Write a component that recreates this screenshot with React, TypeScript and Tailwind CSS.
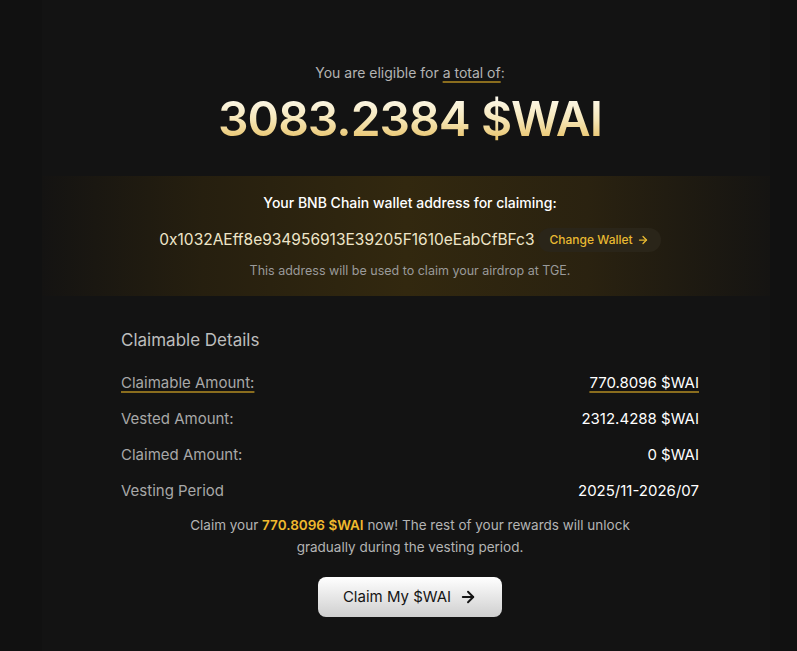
import { ArrowRight } from 'lucide-react';

const rows = [
  { label: 'Claimable Amount:', value: '770.8096 $WAI', highlight: true },
  { label: 'Vested Amount:', value: '2312.4288 $WAI' },
  { label: 'Claimed Amount:', value: '0 $WAI' },
  { label: 'Vesting Period', value: '2025/11-2026/07' },
];

export default function App() {
  return (
    <div className="min-h-[651px] w-full bg-[#111111] font-['Inter',sans-serif] text-white">
      <div className="ml-[42px] mr-[27px] min-h-[651px] bg-[#131313]">
        {/* Total */}
        <div className="flex flex-col items-center pt-[63px] pl-[8px]">
          <p className="text-[14px] leading-5 text-[#b4b4b4]">
            You are eligible for{' '}
            <span className="underline decoration-[#8a6d1e] decoration-2 underline-offset-[3px]">a total of</span>:
          </p>
          <h1 className="mt-[6px] bg-gradient-to-b from-[#ffffff] via-[#f6e7b8] to-[#e2b33c] bg-clip-text text-[48px] leading-[60px] font-semibold tracking-[-1px] text-transparent">
            3083.2384 $WAI
          </h1>
        </div>

        {/* Wallet band */}
        <div className="mt-[27px] flex h-[120px] flex-col items-center bg-[linear-gradient(90deg,#141312_0%,#261f0f_22%,#32280f_50%,#2a2210_75%,#151412_100%)] pt-[17px] pl-[8px]">
          <p className="text-[14px] leading-5 font-medium text-white">Your BNB Chain wallet address for claiming:</p>
          <div className="mt-[15px] flex items-center gap-[3px]">
            <span className="text-[15.5px] leading-6 text-[#efe6c9]">0x1032AEff8e934956913E39205F1610eEabCfBFc3</span>
            <button className="flex h-[24px] items-center gap-1 rounded-full bg-[#2a2519] px-3 text-[12px] font-medium text-[#e8b931]">
              Change Wallet <ArrowRight size={12} strokeWidth={2.5} />
            </button>
          </div>
          <p className="mt-[9px] text-[12.5px] leading-5 text-[#9a9a9a]">This address will be used to claim your airdrop at TGE.</p>
        </div>

        {/* Details */}
        <div className="mx-auto mt-[30px] w-[578px] translate-x-[4px]">
          <h2 className="text-[17px] leading-7 text-[#bdbdbd]">Claimable Details</h2>
          <div className="mt-[17px] flex flex-col gap-[12px]">
            {rows.map((r) => (
              <div key={r.label} className="flex h-[24px] items-center justify-between text-[15px]">
                <span
                  className={
                    r.highlight
                      ? 'text-[#a8a8a8] underline decoration-[#8a6d1e] decoration-2 underline-offset-[3px]'
                      : 'text-[#a8a8a8]'
                  }
                >
                  {r.label}
                </span>
                <span
                  className={
                    r.highlight
                      ? 'text-white underline decoration-[#8a6d1e] decoration-2 underline-offset-[3px]'
                      : 'text-white'
                  }
                >
                  {r.value}
                </span>
              </div>
            ))}
          </div>
        </div>

        <p className="mx-auto mt-[11px] w-[480px] translate-x-[4px] text-center text-[13.5px] leading-[22px] text-[#b4b4b4]">
          Claim your <span className="font-semibold text-[#f0b92d]">770.8096 $WAI</span> now! The rest of your rewards will unlock gradually during the vesting period.
        </p>

        <div className="mt-[19px] flex justify-center pl-[8px]">
          <button className="flex h-[40px] w-[184px] items-center justify-center gap-2 rounded-lg bg-gradient-to-b from-[#ffffff] to-[#cfcfcf] text-[15px] text-[#151515]">
            Claim My $WAI <ArrowRight size={18} strokeWidth={2.5} />
          </button>
        </div>
      </div>
    </div>
  );
}
